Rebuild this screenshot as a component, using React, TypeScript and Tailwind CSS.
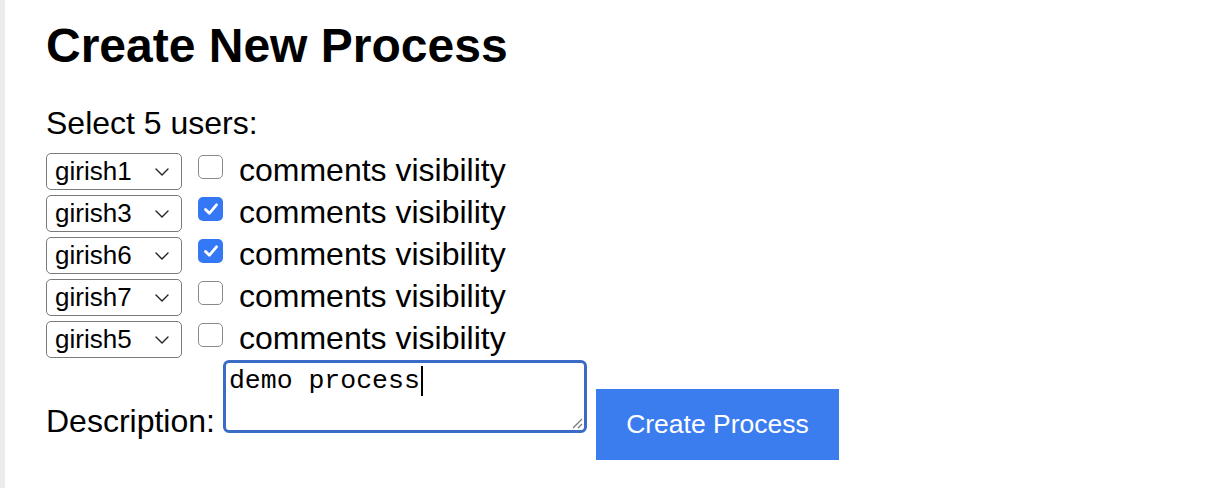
import React from 'react'

const rows = [
  { user: 'girish1', visible: false },
  { user: 'girish3', visible: true },
  { user: 'girish6', visible: true },
  { user: 'girish7', visible: false },
  { user: 'girish5', visible: false },
]

const font = { fontFamily: '"Liberation Sans", Arial, Helvetica, sans-serif' }

function Chevron() {
  return (
    <svg width="14" height="8" viewBox="0 0 14 8" fill="none" className="shrink-0">
      <path d="M1 1l6 6 6-6" stroke="#222" strokeWidth="1.4" strokeLinecap="round" strokeLinejoin="round" />
    </svg>
  )
}

function UserSelect({ user }: { user: string }) {
  return (
    <div className="flex h-[37px] w-[136px] items-center justify-between rounded-[5px] border-[1.5px] border-[#7a7a7a] pl-[8px] pr-[12px] text-[26px] text-black">
      <span className="leading-[29px]">{user}</span>
      <Chevron />
    </div>
  )
}

function Checkbox({ checked }: { checked: boolean }) {
  if (checked) {
    return (
      <div className="mt-[2px] flex h-[24px] w-[25px] items-center justify-center rounded-[5px] bg-[#3478f6]">
        <svg width="16" height="14" viewBox="0 0 16 14" fill="none">
          <path d="M2.5 7.5l3.8 3.8L13.5 2.8" stroke="#fff" strokeWidth="2.8" strokeLinecap="round" strokeLinejoin="round" />
        </svg>
      </div>
    )
  }
  return <div className="mt-[2px] h-[24px] w-[25px] rounded-[5px] border-[1.5px] border-[#8a8a8a] bg-white" />
}

export default function App() {
  return (
    <div className="flex h-[488px] w-full bg-white" style={font}>
      <div className="w-[5px] shrink-0 bg-[#ececec]" />
      <div className="pl-[41px]">
        <h1 className="mt-[19px] text-[48px] font-bold leading-[54px] text-black">Create New Process</h1>

        <div className="mt-[32px] text-[32px] leading-[36px] text-black">Select 5 users:</div>

        <div className="mt-[12px] flex flex-col gap-[5px]">
          {rows.map((r) => (
            <div key={r.user} className="flex h-[37px] items-start">
              <UserSelect user={r.user} />
              <div className="ml-[16px]">
                <Checkbox checked={r.visible} />
              </div>
              <span className="ml-[16px] text-[32px] leading-[34px] text-black">comments visibility</span>
            </div>
          ))}
        </div>

        <div className="mt-[2px] flex items-start">
          <span className="mt-[44px] text-[32px] leading-[34px] text-black">Description:</span>
          {/* focused textarea, drawn as a box so the caret shows */}
          <div className="relative ml-[8px] h-[73px] w-[364px] rounded-[6px] border-[3px] border-[#3a6cc6] bg-white px-[3px] pt-[3px]">
            <span
              className="text-[26.5px] leading-[30px] text-black"
              style={{ fontFamily: '"Liberation Mono", "Courier New", monospace' }}
            >
              demo process
            </span>
            <span className="ml-[1px] inline-block h-[30px] w-[2px] bg-black align-top" />
            <svg className="absolute bottom-[1px] right-[1px]" width="12" height="12" viewBox="0 0 12 12">
              <path d="M11 2L2 11M11 7L7 11" stroke="#777" strokeWidth="1.2" />
            </svg>
          </div>
          <button className="ml-[9px] mt-[29px] h-[71px] w-[243px] bg-[#3b7def] text-[26.5px] leading-[29px] text-white">
            Create Process
          </button>
        </div>
      </div>
    </div>
  )
}
